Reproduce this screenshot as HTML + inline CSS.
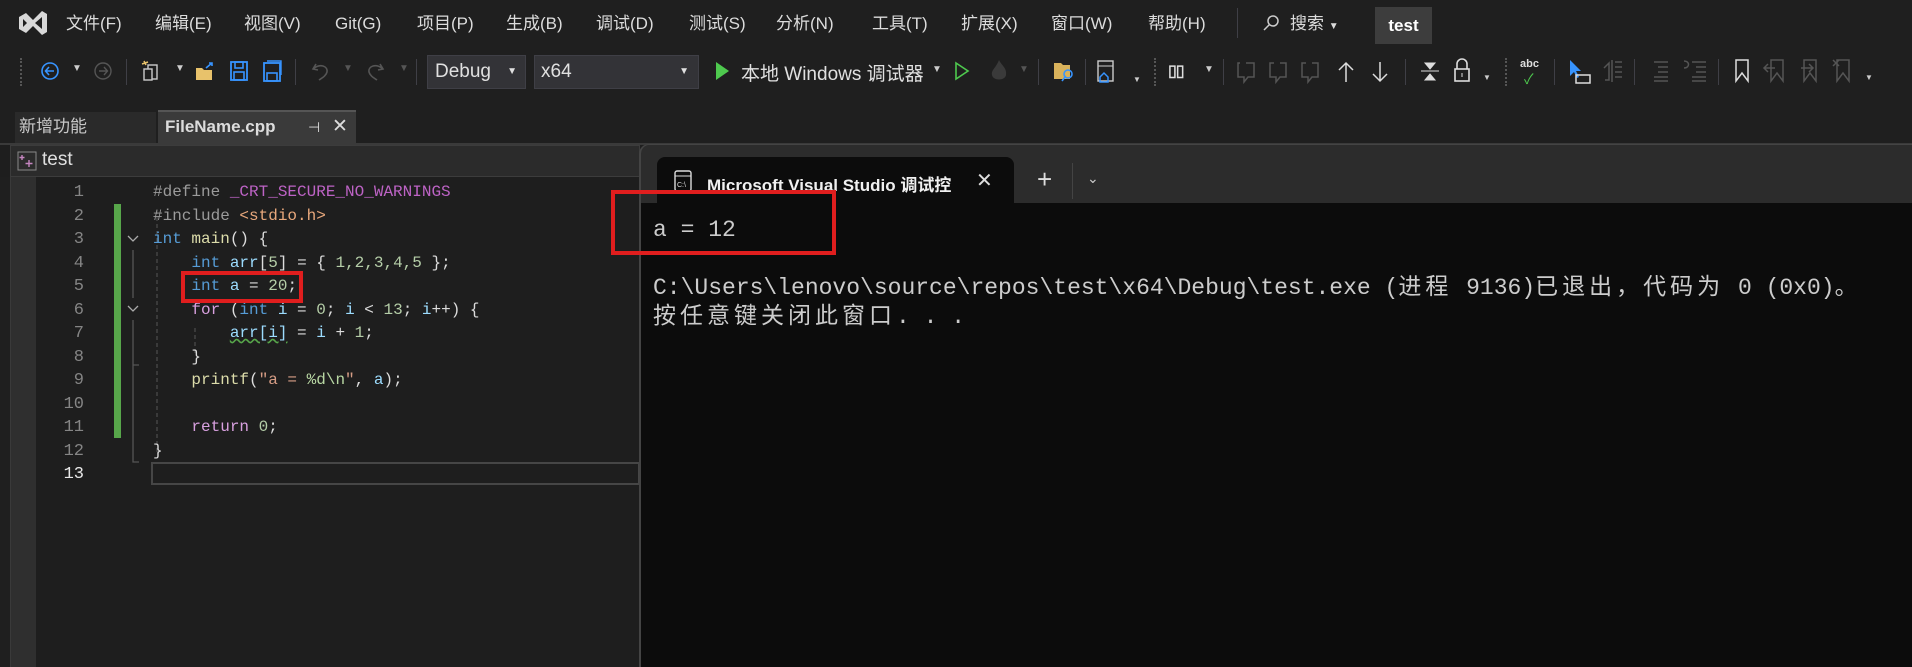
<!DOCTYPE html>
<html><head><meta charset="utf-8"><style>
*{margin:0;padding:0;box-sizing:border-box}
body{width:1912px;height:667px;overflow:hidden;background:#1f1f1f;font-family:"Liberation Sans","Noto Sans CJK SC",sans-serif;color:#d6d6d6;position:relative}
.a{position:absolute;white-space:nowrap}
.m{font-size:17px;top:13px;line-height:22px;height:22px;color:#dcdcdc}
.code{font-family:"Liberation Mono","Noto Sans CJK SC",monospace;font-size:16px;line-height:23.5px}
.code div{white-space:pre;height:23.5px}
.ln{position:absolute;right:0;width:84px;text-align:right;color:#858585;font-size:17px}
.sep{position:absolute;width:1px;height:26px;background:#3f3f46;top:59px}
svg{position:absolute}
</style></head><body>
<svg style="left:17px;top:9px" width="32" height="28" viewBox="0 0 32 28"><path d="M2 8 L9 4 L16 11 L25 2 L30 5 L30 23 L25 26 L16 17 L9 24 L2 20 Z M6 10 L6 18 L10 14 Z M18 14 L25 20 L25 8 Z" fill="#d8d8d8" fill-rule="evenodd"/></svg>
<div class="a m" style="left:66px">文件(F)</div>
<div class="a m" style="left:155px">编辑(E)</div>
<div class="a m" style="left:244px">视图(V)</div>
<div class="a m" style="left:335px">Git(G)</div>
<div class="a m" style="left:417px">项目(P)</div>
<div class="a m" style="left:506px">生成(B)</div>
<div class="a m" style="left:596px">调试(D)</div>
<div class="a m" style="left:689px">测试(S)</div>
<div class="a m" style="left:776px">分析(N)</div>
<div class="a m" style="left:872px">工具(T)</div>
<div class="a m" style="left:961px">扩展(X)</div>
<div class="a m" style="left:1051px">窗口(W)</div>
<div class="a m" style="left:1148px">帮助(H)</div>
<div class="a" style="left:1237px;top:8px;width:1px;height:30px;background:#3f3f46"></div>
<svg style="left:1262px;top:14px" width="18" height="18" viewBox="0 0 18 18"><circle cx="11" cy="7" r="5" fill="none" stroke="#ccc" stroke-width="1.5"/><path d="M7 11 L2 16" stroke="#ccc" stroke-width="1.5"/></svg>
<div class="a m" style="left:1290px">搜索 <span style="font-size:10px">▼</span></div>
<div class="a" style="left:1375px;top:7px;width:57px;height:37px;background:#3d3d3d;color:#fff;font-weight:bold;font-size:17px;text-align:center;line-height:37px">test</div>

<div class="a" style="left:20px;top:58px;width:3px;height:28px;border-left:2px dotted #555"></div>
<svg style="left:40px;top:61px" width="20" height="20"><circle cx="10" cy="10" r="8" fill="none" stroke="#3794ff" stroke-width="1.6"/><path d="M14 10 H6 M9 6 L5.5 10 L9 14" fill="none" stroke="#3794ff" stroke-width="1.6"/></svg>
<div class="a" style="left:72px;top:63px;font-size:10px;color:#ccc">▼</div>
<svg style="left:93px;top:61px" width="20" height="20"><circle cx="10" cy="10" r="8" fill="none" stroke="#555" stroke-width="1.4"/><path d="M6 10 H14 M11 6 L14.5 10 L11 14" fill="none" stroke="#555" stroke-width="1.4"/></svg>
<div class="sep" style="left:126px"></div>
<svg style="left:141px;top:59px" width="22" height="24"><rect x="7" y="6" width="9" height="14" fill="none" stroke="#ccc" stroke-width="1.4"/><rect x="3" y="10" width="8" height="11" fill="#1f1f1f" stroke="#ccc" stroke-width="1.4"/><path d="M3 2 L5 6 M1 5 L7 3" stroke="#e8c26b" stroke-width="1.5"/></svg>
<div class="a" style="left:175px;top:63px;font-size:10px;color:#ccc">▼</div>
<svg style="left:194px;top:60px" width="22" height="22"><path d="M2 8 H8 L10 10 H18 V20 H2 Z" fill="#e8c26b"/><path d="M12 8 L18 3 M15 3 H18 V6" stroke="#3794ff" stroke-width="1.6" fill="none"/></svg>
<svg style="left:229px;top:60px" width="20" height="22"><rect x="2" y="2" width="16" height="18" fill="none" stroke="#3794ff" stroke-width="1.8"/><rect x="6" y="2" width="8" height="6" fill="none" stroke="#3794ff" stroke-width="1.6"/><rect x="5" y="12" width="10" height="8" fill="none" stroke="#3794ff" stroke-width="1.6"/></svg>
<svg style="left:262px;top:60px" width="20" height="22"><rect x="2" y="3" width="16" height="18" fill="none" stroke="#3794ff" stroke-width="1.8"/><rect x="5" y="13" width="10" height="8" fill="none" stroke="#3794ff" stroke-width="1.6"/><path d="M5 1 H19 V15" fill="none" stroke="#3794ff" stroke-width="1.4"/></svg>
<div class="sep" style="left:295px"></div>
<svg style="left:310px;top:60px" width="22" height="22"><path d="M6 4 L3 9 L8 10 M3 9 C10 3 18 6 17 12 C16 16 12 18 9 20" fill="none" stroke="#555" stroke-width="1.6"/></svg>
<div class="a" style="left:343px;top:63px;font-size:10px;color:#555">▼</div>
<svg style="left:364px;top:60px" width="22" height="22"><path d="M16 4 L19 9 L14 10 M19 9 C12 3 4 6 5 12 C6 16 10 18 13 20" fill="none" stroke="#555" stroke-width="1.6"/></svg>
<div class="a" style="left:399px;top:63px;font-size:10px;color:#555">▼</div>
<div class="sep" style="left:416px"></div>
<div class="a" style="left:427px;top:55px;width:99px;height:34px;background:#333337;border:1px solid #3f3f46;font-size:19px;line-height:32px;padding-left:7px;color:#e0e0e0">Debug<span style="position:absolute;right:8px;font-size:10px">▼</span></div>
<div class="a" style="left:534px;top:55px;width:165px;height:34px;background:#333337;border:1px solid #3f3f46;font-size:19px;line-height:32px;padding-left:6px;color:#e0e0e0">x64<span style="position:absolute;right:9px;font-size:10px">▼</span></div>
<svg style="left:714px;top:61px" width="16" height="20"><path d="M2 1 L15 10 L2 19 Z" fill="#4ec94e"/></svg>
<div class="a" style="left:741px;top:59px;font-size:19px;color:#e0e0e0">本地 Windows 调试器</div>
<div class="a" style="left:932px;top:64px;font-size:10px;color:#ccc">▼</div>
<svg style="left:954px;top:61px" width="16" height="20"><path d="M2 2 L14 10 L2 18 Z" fill="none" stroke="#4ec94e" stroke-width="1.6"/></svg>
<svg style="left:988px;top:58px" width="22" height="26"><path d="M11 2 C14 8 19 10 18 17 C17 23 5 23 4 17 C3 12 8 10 11 2 Z" fill="#3a3a3a"/></svg>
<div class="a" style="left:1019px;top:64px;font-size:10px;color:#555">▼</div>
<div class="sep" style="left:1038px"></div>
<svg style="left:1052px;top:59px" width="24" height="24"><path d="M2 4 H9 L11 6 H18 V20 H2 Z" fill="#d9b25b"/><circle cx="16" cy="15" r="4" fill="none" stroke="#3794ff" stroke-width="1.6"/><path d="M13 18 L10 22" stroke="#3794ff" stroke-width="1.6"/></svg>
<div class="sep" style="left:1085px"></div>
<svg style="left:1096px;top:59px" width="22" height="26"><rect x="2" y="2" width="15" height="20" fill="none" stroke="#ccc" stroke-width="1.4"/><path d="M2 7 H17" stroke="#ccc"/><path d="M4 18 L8 14 L12 18 V23 H4 Z" fill="none" stroke="#3794ff" stroke-width="1.5"/></svg>
<div class="a" style="left:1133px;top:75px;font-size:8px;color:#ccc">▼</div>
<div class="a" style="left:1154px;top:58px;width:3px;height:28px;border-left:2px dotted #555"></div>
<div class="a" style="left:1168px;top:61px;font-size:16px;color:#ddd;font-weight:bold;letter-spacing:-1px">▯▯</div>
<div class="a" style="left:1204px;top:64px;font-size:10px;color:#ccc">▼</div>
<div class="sep" style="left:1223px"></div>
<svg style="left:1236px;top:60px" width="200" height="24" fill="none" stroke="#555" stroke-width="1.5"><path d="M4 3 H2 V17 H8 L8 22 L12 17 H18 V3 H10"/><path d="M38 3 H34 V17 H40 L40 22 L44 17 H50 V3 H44"/><path d="M70 3 H66 V17 H72 L72 22 L76 17 H82 V3 H76"/><path d="M110 3 V22 M103 10 L110 3 L117 10" stroke="#ddd"/><path d="M144 2 V21 M137 14 L144 21 L151 14" stroke="#ddd"/></svg>
<div class="sep" style="left:1405px"></div>
<svg style="left:1418px;top:60px" width="24" height="24"><path d="M3 11 H21 M7 3 H17 L12 9 Z M7 20 H17 L12 14 Z" fill="#ddd" stroke="#ddd" stroke-width="1"/></svg>
<svg style="left:1452px;top:58px" width="20" height="26"><path d="M5 11 V6 A5 5 0 0 1 15 6 V11" fill="none" stroke="#ddd" stroke-width="1.6"/><rect x="3" y="11" width="14" height="12" fill="none" stroke="#ddd" stroke-width="1.6"/><path d="M10 15 V19" stroke="#ddd"/></svg>
<div class="a" style="left:1483px;top:73px;font-size:8px;color:#ccc">▼</div>
<div class="a" style="left:1505px;top:58px;width:3px;height:28px;border-left:2px dotted #555"></div>
<div class="a" style="left:1520px;top:58px;font-size:11px;font-weight:bold;color:#ddd">abc</div>
<div class="a" style="left:1524px;top:69px;font-size:14px;color:#4ec94e">✓</div>
<div class="sep" style="left:1554px"></div>
<svg style="left:1567px;top:58px" width="26" height="28"><path d="M3 2 L3 18 L7 14 L10 20 L12 19 L9 13 L14 13 Z" fill="#3794ff"/><rect x="9" y="17" width="14" height="8" fill="none" stroke="#ddd" stroke-width="1.5"/></svg>
<svg style="left:1602px;top:58px" width="22" height="26" stroke="#555" stroke-width="1.5" fill="none"><path d="M10 2 V24 M13 4 H20 M13 9 H20 M13 14 H20 M13 19 H20 M2 10 L7 5 V22 H3"/></svg>
<div class="sep" style="left:1634px"></div>
<svg style="left:1650px;top:58px" width="60" height="26" stroke="#555" stroke-width="1.5" fill="none"><path d="M4 4 H18 M8 9 H18 M8 14 H18 M4 19 H18 M4 23 H18"/><path d="M42 4 H56 M46 9 H56 M46 14 H56 M42 19 H56 M42 23 H56 M34 3 C40 3 40 10 34 10"/></svg>
<div class="sep" style="left:1718px"></div>
<svg style="left:1733px;top:58px" width="140" height="26" stroke-width="1.5" fill="none"><path d="M3 2 H15 V23 L9 15 L3 23 Z" stroke="#ddd"/><path d="M38 2 H50 V23 L44 15 L38 23 Z M31 10 H42 M35 6 L31 10 L35 14" stroke="#555"/><path d="M71 2 H83 V23 L77 15 L71 23 Z M68 10 H80 M76 6 L80 10 L76 14" stroke="#555"/><path d="M104 2 H116 V23 L110 15 L104 23 Z M100 2 L106 8 M106 2 L100 8" stroke="#555"/></svg>
<div class="a" style="left:1865px;top:73px;font-size:8px;color:#ccc">▼</div>

<div class="a" style="left:15px;top:112px;width:141px;height:31px;background:#2a2a2a;font-size:17px;line-height:30px;padding-left:4px;color:#c8c8c8">新增功能</div>
<div class="a" style="left:158px;top:110px;width:198px;height:33px;background:#3a3a3a;border-top:2px solid #555;font-size:17px;line-height:30px;padding-left:7px;color:#dcdcdc;font-weight:bold">FileName.cpp<span style="position:absolute;left:150px;font-weight:normal;font-size:14px">⊣</span><span style="position:absolute;left:174px;font-weight:normal;font-size:19px">✕</span></div>
<div class="a" style="left:0;top:143px;width:1912px;height:2px;background:#3a3a3a"></div>

<div class="a" style="left:0;top:145px;width:640px;height:522px;background:#1e1e1e"></div>
<div class="a" style="left:10px;top:145px;width:630px;height:32px;background:#2b2b2b;border:1px solid #3c3c3c"></div>
<svg style="left:17px;top:151px" width="20" height="20"><rect x="1" y="1" width="18" height="18" fill="#2b2b2b" stroke="#888"/><path d="M5 4 V9 M2.5 6.5 H7.5 M12 9 V16 M8.5 12.5 H15.5" stroke="#c586c0" stroke-width="1.4"/></svg>
<div class="a" style="left:42px;top:149px;font-size:19px;color:#e0e0e0">test</div>
<div class="a" style="left:10px;top:177px;width:26px;height:490px;background:#2f2f2f;border-left:1px solid #3a3a3a"></div>
<div class="a" style="left:0;top:177px;width:10px;height:490px;background:#1f1f1f"></div>

<div class="a code" style="left:0;top:181px;width:84px;height:310px">
<div class="ln" style="top:0">1</div><div class="ln" style="top:23.5px">2</div><div class="ln" style="top:47px">3</div><div class="ln" style="top:70.5px">4</div><div class="ln" style="top:94px">5</div><div class="ln" style="top:117.5px">6</div><div class="ln" style="top:141px">7</div><div class="ln" style="top:164.5px">8</div><div class="ln" style="top:188px">9</div><div class="ln" style="top:211.5px">10</div><div class="ln" style="top:235px">11</div><div class="ln" style="top:258.5px">12</div><div class="ln" style="top:282px;color:#e8e8e8">13</div>
</div>
<div class="a" style="left:114px;top:204px;width:7px;height:234px;background:#57a64a"></div>
<svg style="left:125px;top:180px" width="20" height="300" fill="none" stroke="#aaa" stroke-width="1.3"><path d="M3 56 L8 61 L13 56 M3 126 L8 131 L13 126"/><path d="M8 70 V118" stroke="#555"/><path d="M8 140 V185 H14 M8 185 V282 H14" stroke="#555"/></svg>
<svg style="left:150px;top:204px" width="60" height="260" fill="none" stroke="#555" stroke-width="1" stroke-dasharray="4 3"><path d="M7 6 V250"/><path d="M45 124 V150"/></svg>
<div class="a" style="left:151px;top:462px;width:489px;height:23px;border:2px solid #464646"></div>

<div class="a code" style="left:153px;top:181px;color:#dcdcdc">
<div style="color:#9b9b9b">#define <span style="color:#bd63c5">_CRT_SECURE_NO_WARNINGS</span></div>
<div style="color:#9b9b9b">#include <span style="color:#e8a87c">&lt;stdio.h&gt;</span></div>
<div><span style="color:#569cd6">int</span> <span style="color:#dcdcaa">main</span>() {</div>
<div>    <span style="color:#569cd6">int</span> <span style="color:#9cdcfe">arr</span>[<span style="color:#b5cea8">5</span>] = { <span style="color:#b5cea8">1,2,3,4,5</span> };</div>
<div>    <span style="color:#569cd6">int</span> <span style="color:#9cdcfe">a</span> = <span style="color:#b5cea8">20</span>;</div>
<div>    <span style="color:#d8a0df">for</span> (<span style="color:#569cd6">int</span> <span style="color:#9cdcfe">i</span> = <span style="color:#b5cea8">0</span>; <span style="color:#9cdcfe">i</span> &lt; <span style="color:#b5cea8">13</span>; <span style="color:#9cdcfe">i</span>++) {</div>
<div>        <span style="color:#9cdcfe;text-decoration:underline wavy #57a64a">arr[i]</span> = <span style="color:#9cdcfe">i</span> + <span style="color:#b5cea8">1</span>;</div>
<div>    }</div>
<div>    <span style="color:#dcdcaa">printf</span>(<span style="color:#d69d85">"a = </span><span style="color:#b8d7a3">%d\n</span><span style="color:#d69d85">"</span>, <span style="color:#9cdcfe">a</span>);</div>
<div> </div>
<div>    <span style="color:#d8a0df">return</span> <span style="color:#b5cea8">0</span>;</div>
<div>}</div>
</div>
<div class="a" style="left:181px;top:271px;width:122px;height:32px;border:4px solid #e01e1e"></div>

<div class="a" style="left:639px;top:144px;width:1273px;height:523px;background:#2c2c2c;border-left:2px solid #444;border-top:1px solid #444;border-top-left-radius:10px"></div>
<div class="a" style="left:641px;top:203px;width:1271px;height:464px;background:#0c0c0c"></div>
<div class="a" style="left:657px;top:157px;width:357px;height:47px;background:#0c0c0c;border-radius:8px 8px 0 0"></div>
<svg style="left:674px;top:170px" width="18" height="22"><rect x="1" y="1" width="16" height="20" rx="2" fill="none" stroke="#ddd" stroke-width="1.4"/><path d="M1 6 H17" stroke="#ddd"/><text x="3" y="17" font-size="7" fill="#ddd" font-family="Liberation Sans">C:\</text></svg>
<div class="a" style="left:707px;top:171px;font-size:17px;font-weight:bold;color:#f0f0f0">Microsoft Visual Studio 调试控</div>
<div class="a" style="left:976px;top:168px;font-size:20px;color:#ddd">✕</div>
<div class="a" style="left:1037px;top:164px;font-size:26px;color:#ddd">+</div>
<div class="a" style="left:1072px;top:163px;width:1px;height:36px;background:#444"></div>
<div class="a" style="left:1087px;top:170px;font-size:14px;color:#ccc">⌄</div>

<div class="a" style="left:653px;top:216px;font-family:'Liberation Mono','Noto Sans CJK SC',monospace;font-size:23px;color:#cccccc;line-height:29px">a = 12<br><br>C:\Users\lenovo\source\repos\test\x64\Debug\test.exe (<span style="letter-spacing:4px">进程</span> 9136)<span style="letter-spacing:4px">已退出，代码为</span> 0 (0x0)<span>。</span><br><span style="letter-spacing:4px">按任意键关闭此窗口</span>. . .</div>
<div class="a" style="left:611px;top:190px;width:225px;height:65px;border:4px solid #e01e1e"></div>
</body></html>
